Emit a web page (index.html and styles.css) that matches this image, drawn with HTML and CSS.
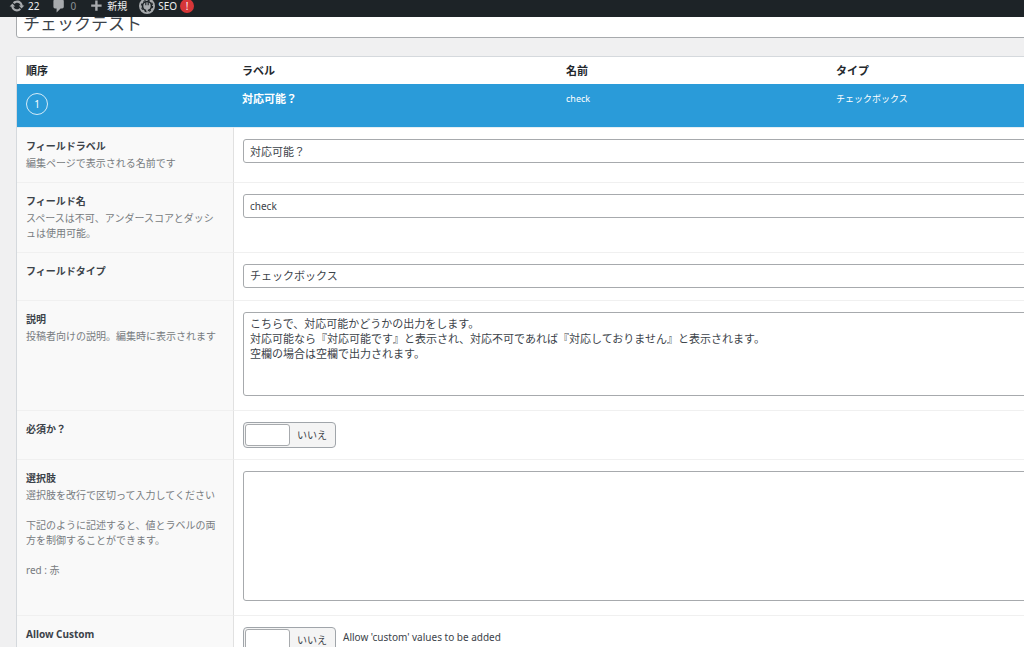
FILE: index.html
```
<!DOCTYPE html>
<html lang="ja">
<head>
<meta charset="utf-8">
<meta name="viewport" content="width=device-width, initial-scale=1">
<title>フィールド編集</title>
<link rel="stylesheet" href="styles.css">
</head>
<body>
<nav class="adminbar">
  <a class="bar-item" href="#"><svg class="icon" viewBox="0 0 20 20"><path d="M10.2 3.28c3.53 0 6.43 2.61 6.92 6h2.08l-3.5 4-3.5-4h2.32c-.45-1.97-2.21-3.45-4.32-3.45-1.45 0-2.73.71-3.54 1.78L4.95 5.66C6.23 4.2 8.11 3.28 10.2 3.28zm-.4 13.44c-3.52 0-6.43-2.61-6.92-6H.8l3.5-4c1.17 1.33 2.33 2.67 3.5 4H5.48c.45 1.97 2.21 3.45 4.32 3.45 1.45 0 2.73-.71 3.54-1.78l1.71 1.95c-1.28 1.46-3.15 2.38-5.25 2.38z"/></svg>22</a>
  <a class="bar-item dim" href="#"><svg class="icon" viewBox="0 0 20 20"><path d="M5 2h9q2 0 2 2v7q0 2-2 2h-2l-5 5v-5H5q-2 0-2-2V4q0-2 2-2z"/></svg>0</a>
  <a class="bar-item" href="#"><svg class="icon" viewBox="0 0 20 20"><path d="M17 8v3h-5v5H9v-5H4V8h5V3h3v5z"/></svg>新規</a>
  <a class="bar-item" href="#"><svg class="icon" viewBox="0 0 20 20"><circle cx="10" cy="10" r="10"/><circle cx="10" cy="10" r="5.600" fill="none" stroke="#1d2327" stroke-width="2"/><circle cx="10" cy="10" r="7" fill="none" stroke="#1d2327" stroke-width="1.4" stroke-dasharray="2.8 2.7"/><path d="M7 8h6v3l-2 2v4H9v-4l-2-2z"/><path d="M8.500 5v4M11.500 5v4" stroke="#1d2327" stroke-width="1.400"/></svg>SEO<span class="badge">!</span></a>
</nav>
<main class="page">
  <input class="title" type="text" aria-label="タイトル" value="チェックテスト">
  <section class="group">
    <table class="heads">
      <colgroup><col class="c-order"><col class="c-label"><col class="c-name"><col></colgroup>
      <thead><tr><th>順序</th><th>ラベル</th><th>名前</th><th>タイプ</th></tr></thead>
      <tbody><tr><td><span class="order">1</span></td><td><a class="field-link" href="#">対応可能？</a></td><td class="meta">check</td><td class="meta">チェックボックス</td></tr></tbody>
    </table>
    <table class="settings">
      <tbody>
      <tr><th><label for="label">フィールドラベル</label><p>編集ページで表示される名前です</p></th><td><input class="box" id="label" type="text" value="対応可能？"></td></tr>
      <tr><th><label for="name">フィールド名</label><p>スペースは不可、アンダースコアとダッシュは使用可能。</p></th><td><input class="box latin" id="name" type="text" value="check"></td></tr>
      <tr><th><label for="type">フィールドタイプ</label></th><td><select class="box" id="type"><option>チェックボックス</option></select></td></tr>
      <tr><th><label for="desc">説明</label><p>投稿者向けの説明。編集時に表示されます</p></th><td><textarea class="box note" id="desc">こちらで、対応可能かどうかの出力をします。
対応可能なら『対応可能です』と表示され、対応不可であれば『対応しておりません』と表示されます。
空欄の場合は空欄で出力されます。</textarea></td></tr>
      <tr><th><label for="required">必須か？</label></th><td><label class="switch"><input type="checkbox" id="required">いいえ</label></td></tr>
      <tr><th><label for="choices">選択肢</label><p>選択肢を改行で区切って入力してください</p><p class="para">下記のように記述すると、値とラベルの両方を制御することができます。</p><p class="para">red : 赤</p></th><td><textarea class="box choices" id="choices"></textarea></td></tr>
      <tr><th><label for="custom">Allow Custom</label></th><td><div class="line"><label class="switch"><input type="checkbox" id="custom">いいえ</label><span>Allow 'custom' values to be added</span></div></td></tr>
      </tbody>
    </table>
  </section>
</main>
</body>
</html>
```
FILE: styles.css
```
* { box-sizing: border-box; }
html, body { height: 100%; }
body {
  margin: 0;
  overflow: hidden;
  background: #f0f0f1;
  color: #3c434a;
  font: 10px/15px "Noto Sans", "Noto Sans CJK JP", sans-serif;
}
a { color: inherit; text-decoration: none; }
input, select, textarea { font: inherit; color: inherit; margin: 0; }
p { margin: 0; }

.adminbar {
  position: fixed;
  inset: 0 0 auto;
  z-index: 1;
  display: flex;
  gap: 12px;
  height: 17px;
  padding-left: 9px;
  overflow: hidden;
  background: #1d2327;
  color: #f0f0f1;
  line-height: 12px;
}
.bar-item { display: flex; align-items: center; gap: 3px; height: 12px; }
.dim { color: #8c9196; }
.icon { width: 16px; height: 16px; fill: #a7aaad; }
.badge {
  width: 14px;
  height: 14px;
  border-radius: 50%;
  background: #d63638;
  color: #fff;
  line-height: 14px;
  text-align: center;
}

.page { margin-right: -20px; padding: 9px 0 0 16px; }
.title {
  display: block;
  width: 100%;
  height: 29px;
  padding: 0 6px 2px;
  border: 1px solid #a7aaad;
  border-radius: 3px;
  background: #fff;
  font-size: 17px;
}
.group { margin-top: 18px; border: 1px solid #d5d9dd; border-right: 0; background: #fff; }
table { width: 100%; border-spacing: 0; table-layout: fixed; }
th, td { text-align: left; vertical-align: top; }

.c-order { width: 216px; }
.c-label { width: 323px; }
.c-name { width: 270px; }
.heads th { padding: 6px 9px; font-size: 11px; color: #23282d; }
.heads td { height: 43px; padding: 7px 9px; background: #2a9bd9; color: #fff; }
.heads th:nth-child(n+3), .heads td:nth-child(n+3) { padding-left: 10px; }
.heads .meta { font-size: 9px; }
.field-link { font-size: 11px; font-weight: bold; }
.order {
  display: block;
  width: 22px;
  height: 22px;
  margin-top: 2px;
  border: 1px solid #d4ebf7;
  border-radius: 50%;
  line-height: 20px;
  text-align: center;
}

.settings th, .settings td { height: 48px; padding: 11px 9px; border-top: 1px solid #f0f0f0; }
.settings tr:first-child > * { border-top-color: #e4eef4; }
.settings th {
  width: 217px;
  padding-right: 14px;
  border-right: 1px solid #e1e1e1;
  background: #f9f9f9;
  color: #777b80;
  font-weight: normal;
  line-break: loose;
}
.settings th > label { display: block; margin-bottom: 2px; color: #3c434a; font-weight: bold; }
.settings th .para { margin-top: 15px; }
.box {
  display: block;
  width: 100%;
  height: 24px;
  padding: 0 6px 1px;
  border: 1px solid #a7aaad;
  border-radius: 3px;
  background: #fff;
  font-size: 11px;
  appearance: none;
}
.latin { font-size: 10px; }
textarea.box { padding: 3px 6px; resize: none; margin-bottom: 3px; }
.note { height: 84px; }
.choices { height: 130px; }
.line { display: flex; align-items: flex-start; gap: 7px; }
.line > span { padding-top: 3px; }
.switch {
  display: inline-flex;
  align-items: center;
  gap: 7px;
  height: 26px;
  padding: 0 8px 0 1px;
  border: 1px solid #a0a5aa;
  border-radius: 4px;
  background: #f4f4f4;
  vertical-align: top;
}
.switch input {
  width: 45px;
  height: 22px;
  border: 1px solid #a7aaad;
  border-radius: 3px;
  background: #fff;
  appearance: none;
}
```
